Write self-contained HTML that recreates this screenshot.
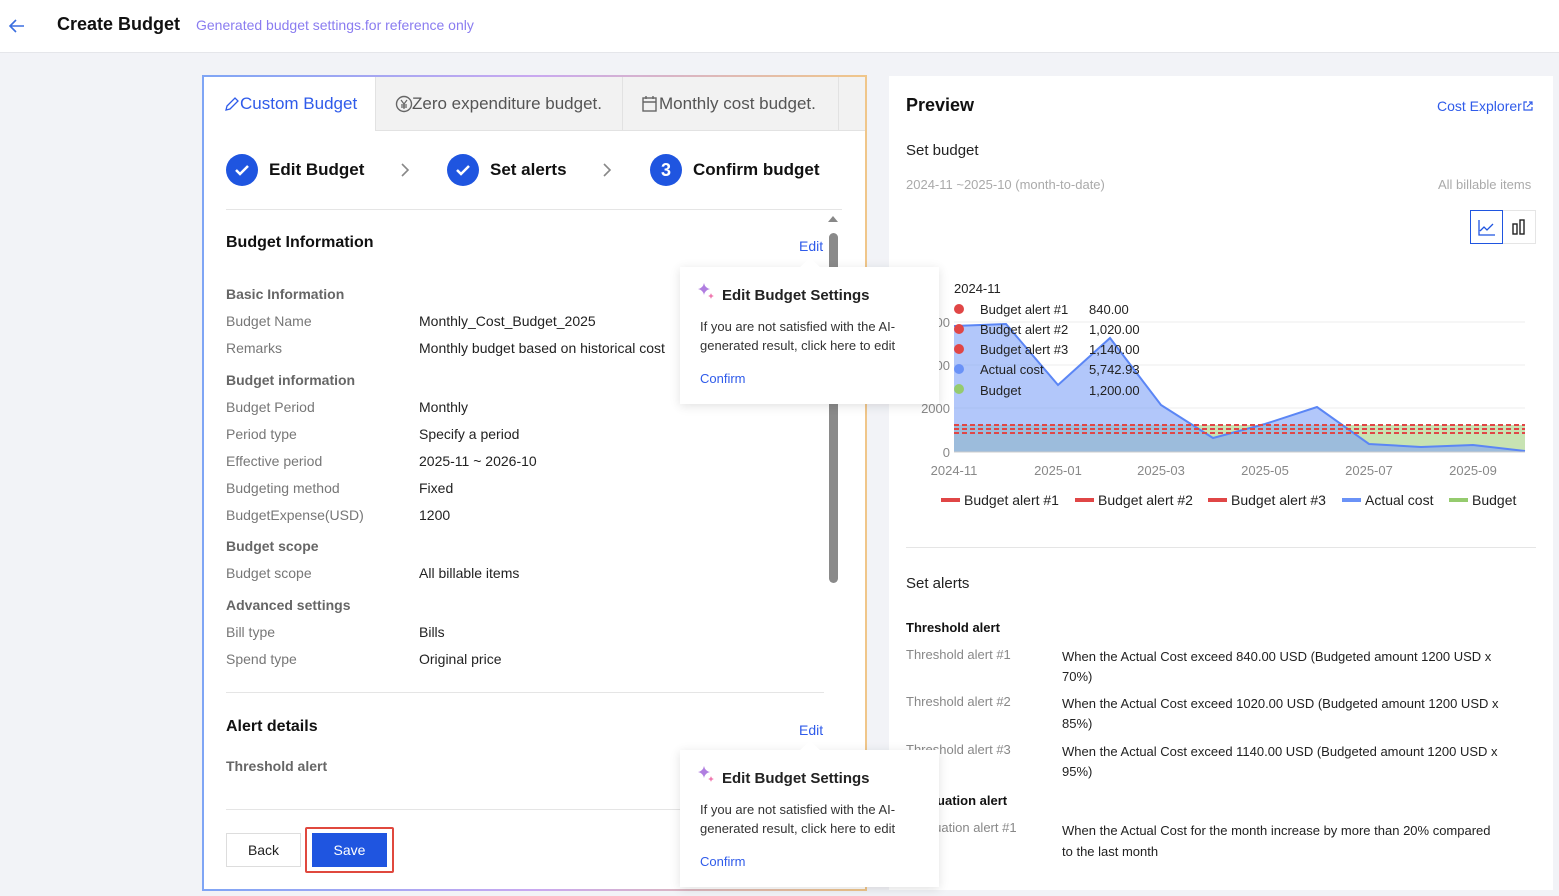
<!DOCTYPE html>
<html><head><meta charset="utf-8"><style>
*{box-sizing:border-box;margin:0;padding:0}
body{width:1559px;height:896px;background:#f2f3f7;font-family:"Liberation Sans",sans-serif;position:relative;overflow:hidden;color:#222}
.a{position:absolute;white-space:nowrap}
.hdr{position:absolute;left:0;top:0;width:1559px;height:53px;background:#fff;border-bottom:1px solid #e5e6ea}
.card{position:absolute;background:#fff}
.lbl{color:#777;font-size:14px}
.val{color:#222;font-size:14px}
.sec{color:#666;font-size:14px;font-weight:bold}
.pop{position:absolute;background:#fff;box-shadow:0 2px 10px rgba(0,0,0,.12);z-index:5}
.pop .t{position:absolute;left:20px;top:20px;font-size:15px;color:#222;font-weight:bold}
.pop .d{position:absolute;left:20px;top:50px;font-size:13px;color:#333;line-height:19px;width:215px;white-space:normal}
.pop .c{position:absolute;left:20px;top:104px;font-size:13px;color:#2f5bea}
.step{position:absolute;width:32px;height:32px;border-radius:50%;background:#1f55e0;color:#fff;text-align:center;line-height:32px;font-weight:bold;font-size:18px}
</style></head><body>
<div class="hdr">
<svg class="a" style="left:8px;top:18px" width="18" height="16" viewBox="0 0 18 16"><path d="M16 8H2M8 2L2 8l6 6" stroke="#3b6fe0" stroke-width="1.6" fill="none"/></svg>
<div class="a" style="left:57px;top:14px;font-size:18px;font-weight:bold;color:#111">Create Budget</div>
<div class="a" style="left:196px;top:17px;font-size:14px;color:#8a7cf0">Generated budget settings.for reference only</div>
</div>

<!-- left card -->
<div class="card" style="left:202px;top:75px;width:665px;height:816px;border:2px solid;border-image:linear-gradient(90deg,#7fa5f5,#c9a8f0,#f0c68a) 1;"></div>
<div class="a" style="left:375px;top:77px;width:490px;height:54px;background:#f2f2f2;border-bottom:1px solid #e2e2e2"></div>
<div class="a" style="left:622px;top:77px;width:1px;height:54px;background:#e2e2e2"></div>
<div class="a" style="left:838px;top:77px;width:1px;height:54px;background:#e2e2e2"></div>
<div class="a" style="left:375px;top:77px;width:1px;height:54px;background:#e2e2e2"></div>
<svg class="a" style="left:224px;top:96px" width="16" height="16"><path d="M2 14l1-4 8-8 3 3-8 8z" fill="none" stroke="#2f5bea" stroke-width="1.3"/></svg>
<div class="a" style="left:240px;top:94px;font-size:17px;color:#2f5bea">Custom Budget</div>
<svg class="a" style="left:395px;top:95px" width="18" height="18"><circle cx="9" cy="9" r="7.5" fill="none" stroke="#666" stroke-width="1.4"/><path d="M6 5l3 4 3-4M9 9v5M6 10h6M6 12h6" stroke="#666" stroke-width="1.2" fill="none"/></svg>
<div class="a" style="left:412px;top:94px;font-size:17px;color:#555">Zero expenditure budget.</div>
<svg class="a" style="left:641px;top:94px" width="18" height="20"><rect x="2" y="4" width="13" height="13" fill="none" stroke="#666" stroke-width="1.4"/><path d="M2 8h13M5 2v3M12 2v3" stroke="#666" stroke-width="1.4"/></svg>
<div class="a" style="left:659px;top:94px;font-size:17px;color:#555">Monthly cost budget.</div>

<div class="step" style="left:226px;top:154px"><svg width="32" height="32"><path d="M10 16l4 4 8-8" stroke="#fff" stroke-width="2.5" fill="none"/></svg></div>
<div class="a" style="left:269px;top:160px;font-size:17px;font-weight:bold;color:#111">Edit Budget</div>
<svg class="a" style="left:400px;top:162px" width="10" height="16"><path d="M2 2l6 6-6 6" stroke="#888" stroke-width="1.6" fill="none"/></svg>
<div class="step" style="left:447px;top:154px"><svg width="32" height="32"><path d="M10 16l4 4 8-8" stroke="#fff" stroke-width="2.5" fill="none"/></svg></div>
<div class="a" style="left:490px;top:160px;font-size:17px;font-weight:bold;color:#111">Set alerts</div>
<svg class="a" style="left:602px;top:162px" width="10" height="16"><path d="M2 2l6 6-6 6" stroke="#888" stroke-width="1.6" fill="none"/></svg>
<div class="step" style="left:650px;top:154px">3</div>
<div class="a" style="left:693px;top:160px;font-size:17px;font-weight:bold;color:#111">Confirm budget</div>
<div class="a" style="left:226px;top:209px;width:616px;height:1px;background:#e5e5e5"></div>

<div class="a" style="left:828px;top:216px;width:0;height:0;border:5px solid transparent;border-bottom:6px solid #888;border-top:0"></div>
<div class="a" style="left:829px;top:233px;width:9px;height:350px;background:#8a8a8a;border-radius:5px"></div>

<div class="a" style="left:226px;top:234px;font-size:16px;font-weight:bold;color:#111">Budget Information</div>
<div class="a" style="left:799px;top:238px;font-size:14px;color:#2f5bea">Edit</div>
<div class="a sec" style="left:226px;top:286px">Basic Information</div>
<div class="a lbl" style="left:226px;top:313px">Budget Name</div><div class="a val" style="left:419px;top:313px">Monthly_Cost_Budget_2025</div>
<div class="a lbl" style="left:226px;top:340px">Remarks</div><div class="a val" style="left:419px;top:340px">Monthly budget based on historical cost</div>
<div class="a sec" style="left:226px;top:372px">Budget information</div>
<div class="a lbl" style="left:226px;top:399px">Budget Period</div><div class="a val" style="left:419px;top:399px">Monthly</div>
<div class="a lbl" style="left:226px;top:426px">Period type</div><div class="a val" style="left:419px;top:426px">Specify a period</div>
<div class="a lbl" style="left:226px;top:453px">Effective period</div><div class="a val" style="left:419px;top:453px">2025-11 ~ 2026-10</div>
<div class="a lbl" style="left:226px;top:480px">Budgeting method</div><div class="a val" style="left:419px;top:480px">Fixed</div>
<div class="a lbl" style="left:226px;top:507px">BudgetExpense(USD)</div><div class="a val" style="left:419px;top:507px">1200</div>
<div class="a sec" style="left:226px;top:538px">Budget scope</div>
<div class="a lbl" style="left:226px;top:565px">Budget scope</div><div class="a val" style="left:419px;top:565px">All billable items</div>
<div class="a sec" style="left:226px;top:597px">Advanced settings</div>
<div class="a lbl" style="left:226px;top:624px">Bill type</div><div class="a val" style="left:419px;top:624px">Bills</div>
<div class="a lbl" style="left:226px;top:651px">Spend type</div><div class="a val" style="left:419px;top:651px">Original price</div>
<div class="a" style="left:226px;top:692px;width:598px;height:1px;background:#e5e5e5"></div>
<div class="a" style="left:226px;top:718px;font-size:16px;font-weight:bold;color:#111">Alert details</div>
<div class="a" style="left:799px;top:722px;font-size:14px;color:#2f5bea">Edit</div>
<div class="a sec" style="left:226px;top:758px">Threshold alert</div>
<div class="a" style="left:226px;top:809px;width:598px;height:1px;background:#e5e5e5"></div>
<div class="a" style="left:226px;top:833px;width:75px;height:34px;border:1px solid #ddd;background:#fff;text-align:center;line-height:32px;font-size:14px;color:#222">Back</div>
<div class="a" style="left:305px;top:827px;width:89px;height:46px;border:2px solid #e0483e;border-radius:2px"></div>
<div class="a" style="left:312px;top:833px;width:75px;height:34px;background:#1f55e0;text-align:center;line-height:34px;font-size:14px;color:#fff">Save</div>

<!-- right card -->
<div class="card" style="left:889px;top:76px;width:664px;height:814px"></div>
<div class="a" style="left:906px;top:95px;font-size:18px;font-weight:bold;color:#111">Preview</div>
<div class="a" style="left:1437px;top:98px;font-size:14px;color:#2f5bea">Cost Explorer</div>
<svg class="a" style="left:1522px;top:100px" width="12" height="12"><path d="M5 2H2v8h8V7M7 2h3v3M10 2L5 7" stroke="#2f5bea" stroke-width="1.2" fill="none"/></svg>
<div class="a" style="left:906px;top:142px;font-size:15px;color:#222">Set budget</div>
<div class="a" style="left:906px;top:177px;font-size:13px;color:#aaa">2024-11 ~2025-10 (month-to-date)</div>
<div class="a" style="left:1438px;top:177px;font-size:13px;color:#aaa">All billable items</div>
<div class="a" style="left:1470px;top:210px;width:33px;height:34px;border:1px solid #1f55e0"><svg width="31" height="32"><path d="M8 9v15h16M9 20l4-4 3 3 6-6" stroke="#1f55e0" stroke-width="1.3" fill="none"/></svg></div>
<div class="a" style="left:1503px;top:210px;width:33px;height:34px;border:1px solid #e5e5e5;border-left:0"><svg width="32" height="32"><rect x="10" y="13" width="4" height="10" fill="none" stroke="#222" stroke-width="1.4"/><rect x="17" y="9" width="4" height="14" fill="none" stroke="#222" stroke-width="1.4"/></svg></div>

<svg class="a" style="left:900px;top:270px" width="640" height="250" font-family="Liberation Sans" font-size="13">
<g stroke="#eee"><line x1="54" y1="52" x2="625" y2="52"/><line x1="54" y1="95" x2="625" y2="95"/><line x1="54" y1="138" x2="625" y2="138"/><line x1="54" y1="182" x2="625" y2="182"/></g>
<g fill="#888" text-anchor="end"><text x="50" y="143">2000</text><text x="50" y="187">0</text><text x="50" y="100">4000</text><text x="50" y="57">6000</text></g>
<rect x="54" y="155" width="571" height="27" fill="#c8e3b3"/>
<path d="M54 56L106 54L158 115L210 68L261 135L313 168L365 154L417 137L469 174L521 177L573 175L625 181V182H54Z" fill="#7fa2f7" fill-opacity=".6"/>
<path d="M54 56L106 54L158 115L210 68L261 135L313 168L365 154L417 137L469 174L521 177L573 175L625 181" fill="none" stroke="#5b86f5" stroke-width="2"/>
<g stroke="#e04646" stroke-width="2" stroke-dasharray="5 3"><line x1="54" y1="155" x2="625" y2="155"/><line x1="54" y1="159" x2="625" y2="159"/><line x1="54" y1="163" x2="625" y2="163"/></g>
<line x1="54" y1="182" x2="625" y2="182" stroke="#ccc"/>
<g fill="#888" text-anchor="middle"><text x="54" y="205">2024-11</text><text x="158" y="205">2025-01</text><text x="261" y="205">2025-03</text><text x="365" y="205">2025-05</text><text x="469" y="205">2025-07</text><text x="573" y="205">2025-09</text></g>
<g fill="#222"><text x="54" y="23">2024-11</text>
<circle cx="59" cy="39" r="5" fill="#e04646"/><text x="80" y="44">Budget alert #1</text><text x="189" y="44">840.00</text>
<circle cx="59" cy="59" r="5" fill="#e04646"/><text x="80" y="64">Budget alert #2</text><text x="189" y="64">1,020.00</text>
<circle cx="59" cy="79" r="5" fill="#e04646"/><text x="80" y="84">Budget alert #3</text><text x="189" y="84">1,140.00</text>
<circle cx="59" cy="99" r="5" fill="#6a92f7"/><text x="80" y="104">Actual cost</text><text x="189" y="104">5,742.93</text>
<circle cx="59" cy="119" r="5" fill="#95cb6e"/><text x="80" y="125">Budget</text><text x="189" y="125">1,200.00</text></g>
<g font-size="14" fill="#222">
<rect x="41" y="228" width="19" height="4" fill="#e04646"/><text x="64" y="235">Budget alert #1</text>
<rect x="175" y="228" width="19" height="4" fill="#e04646"/><text x="198" y="235">Budget alert #2</text>
<rect x="308" y="228" width="19" height="4" fill="#e04646"/><text x="331" y="235">Budget alert #3</text>
<rect x="442" y="228" width="19" height="4" fill="#6a92f7"/><text x="465" y="235">Actual cost</text>
<rect x="549" y="228" width="19" height="4" fill="#95cb6e"/><text x="572" y="235">Budget</text></g>
</svg>
<div class="a" style="left:906px;top:547px;width:630px;height:1px;background:#e5e5e5"></div>
<div class="a" style="left:906px;top:575px;font-size:15px;color:#222">Set alerts</div>
<div class="a" style="left:906px;top:620px;font-size:13px;font-weight:bold;color:#111">Threshold alert</div>
<div class="a" style="left:906px;top:647px;font-size:13px;color:#888">Threshold alert #1</div>
<div class="a" style="left:1062px;top:647px;font-size:13px;color:#222;line-height:20px;width:450px;white-space:normal">When the Actual Cost exceed 840.00 USD (Budgeted amount 1200 USD x 70%)</div>
<div class="a" style="left:906px;top:694px;font-size:13px;color:#888">Threshold alert #2</div>
<div class="a" style="left:1062px;top:694px;font-size:13px;color:#222;line-height:20px;width:450px;white-space:normal">When the Actual Cost exceed 1020.00 USD (Budgeted amount 1200 USD x 85%)</div>
<div class="a" style="left:906px;top:742px;font-size:13px;color:#888">Threshold alert #3</div>
<div class="a" style="left:1062px;top:742px;font-size:13px;color:#222;line-height:20px;width:450px;white-space:normal">When the Actual Cost exceed 1140.00 USD (Budgeted amount 1200 USD x 95%)</div>
<div class="a" style="left:906px;top:793px;font-size:13px;font-weight:bold;color:#111">Fluctuation alert</div>
<div class="a" style="left:906px;top:820px;font-size:13px;color:#888">Fluctuation alert #1</div>
<div class="a" style="left:1062px;top:820px;font-size:13px;color:#222;line-height:21px;width:440px;white-space:normal">When the Actual Cost for the month increase by more than 20% compared to the last month</div>

<!-- popups -->
<div class="pop" style="left:680px;top:267px;width:259px;height:137px">
<svg class="a" style="left:17px;top:15px" width="20" height="20"><path d="M7 1Q8 6 13 7Q8 8 7 13Q6 8 1 7Q6 6 7 1Z" fill="#b07ee0"/><path d="M14 11Q14.5 13.5 17 14Q14.5 14.5 14 17Q13.5 14.5 11 14Q13.5 13.5 14 11Z" fill="#f07ab0"/></svg>
<div class="t" style="left:42px">Edit Budget Settings</div>
<div class="d">If you are not satisfied with the AI-generated result, click here to edit</div>
<div class="c">Confirm</div></div>
<div class="a" style="left:803px;top:260px;width:14px;height:14px;background:#fff;transform:rotate(45deg);z-index:6"></div>
<div class="pop" style="left:680px;top:750px;width:259px;height:137px">
<svg class="a" style="left:17px;top:15px" width="20" height="20"><path d="M7 1Q8 6 13 7Q8 8 7 13Q6 8 1 7Q6 6 7 1Z" fill="#b07ee0"/><path d="M14 11Q14.5 13.5 17 14Q14.5 14.5 14 17Q13.5 14.5 11 14Q13.5 13.5 14 11Z" fill="#f07ab0"/></svg>
<div class="t" style="left:42px">Edit Budget Settings</div>
<div class="d">If you are not satisfied with the AI-generated result, click here to edit</div>
<div class="c">Confirm</div></div>
<div class="a" style="left:803px;top:743px;width:14px;height:14px;background:#fff;transform:rotate(45deg);z-index:6"></div>
</body></html>
